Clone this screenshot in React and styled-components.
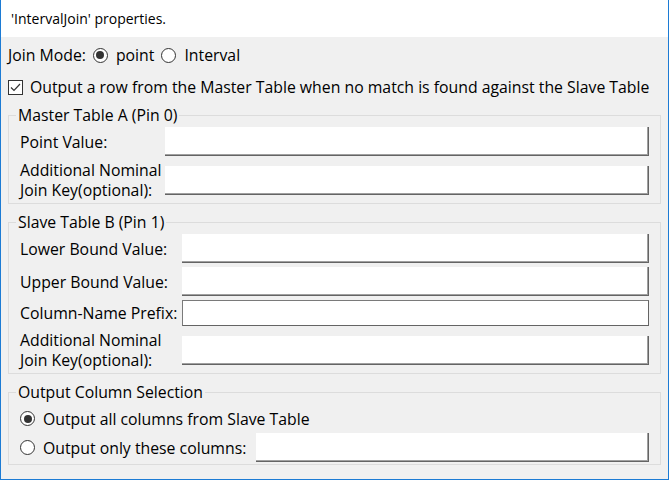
import styled, { createGlobalStyle } from "styled-components";

const GlobalStyle = createGlobalStyle`
    html, body {
        margin: 0;
        padding: 0;
        background: #ffffff;
    }
    * {
        box-sizing: border-box;
    }
`;

const Window = styled.div`
    width: 669px;
    height: 480px;
    background: #f0f0f0;
    border: 1px solid #1c7bd4;
    border-top: none;
    font-family: "Open Sans", "Noto Sans", sans-serif;
    font-size: 15.8px;
    color: #000;
    display: flex;
    flex-direction: column;
`;

const TitleBar = styled.div`
    height: 37px;
    flex: none;
    background: #fff;
    padding-left: 10px;
    line-height: 37px;
    font-size: 14px;
`;

const Content = styled.div`
    padding: 2px 7px 0 7px;
`;

const Line = styled.div`
    height: 32px;
    display: flex;
    align-items: center;
    gap: ${(p) => p.$gap || 7}px;
    white-space: nowrap;
`;

const Choice = styled.label`
    display: flex;
    align-items: center;
    gap: 8px;
`;

const RadioDot = styled.span`
    width: 15px;
    height: 15px;
    flex: none;
    border-radius: 50%;
    border: 1px solid #333;
    background: #fff;
    display: flex;
    align-items: center;
    justify-content: center;

    &::after {
        content: "";
        width: 8px;
        height: 8px;
        border-radius: 50%;
        background: ${(p) => (p.$checked ? "#333" : "transparent")};
    }
`;

const CheckBox = styled.span`
    width: 15px;
    height: 15px;
    flex: none;
    border: 1px solid #333;
    background: #fff;
    display: flex;
    align-items: center;
    justify-content: center;
`;

const Group = styled.fieldset`
    margin: ${(p) => p.$top || 0}px 0 0 0;
    padding: ${(p) => p.$padTop || 0}px 11px ${(p) => p.$padBottom || 1}px 11px;
    border: 1px solid #dcdcdc;
    min-width: 0;
`;

const Legend = styled.legend`
    margin-left: -4px;
    padding: 0 2px;
    line-height: 20px;
`;

const FormRow = styled.div`
    display: grid;
    grid-template-columns: ${(p) => p.$labelWidth}px 1fr;
    align-items: center;
    padding: 2px 0;
`;

const Label = styled.div`
    line-height: 20px;
    white-space: nowrap;
`;

const Field = styled.input`
    display: block;
    width: 100%;
    height: ${(p) => (p.$framed ? 26 : 29)}px;
    margin: 0;
    padding: 0 4px;
    font: inherit;
    background: #fff;
    outline: none;
    border: ${(p) => (p.$framed ? "1px solid #7a7a7a" : "none")};
    border-right: 1px solid #646464;
    border-bottom: 1px solid #646464;
    box-shadow: ${(p) => (p.$framed ? "none" : "inset -1px -1px 0 #a0a0a0")};
`;

const OptionRow = styled.div`
    height: 29px;
    display: flex;
    align-items: center;
    gap: 10px;
    white-space: nowrap;
`;

const Check = () => (
    <svg width="11" height="9" viewBox="0 0 11 9">
        <path d="M1 4.5 L4 7.5 L10 1" fill="none" stroke="#333" strokeWidth="1.2" />
    </svg>
);

const masterRows = [
    { label: "Point Value:" },
    { label: ["Additional Nominal", "Join Key(optional):"] },
];

const slaveRows = [
    { label: "Lower Bound Value:" },
    { label: "Upper Bound Value:" },
    { label: "Column-Name Prefix:", framed: true },
    { label: ["Additional Nominal", "Join Key(optional):"] },
];

const Rows = ({ rows, labelWidth }) =>
    rows.map((row, i) => (
        <FormRow $labelWidth={labelWidth} key={i}>
            <Label>
                {Array.isArray(row.label)
                    ? row.label.map((l) => <div key={l}>{l}</div>)
                    : row.label}
            </Label>
            <Field type="text" $framed={row.framed} />
        </FormRow>
    ));

export default function App() {
    return (
        <>
            <GlobalStyle />
            <Window>
                <TitleBar>'IntervalJoin' properties.</TitleBar>
                <Content>
                    <Line>
                        <span>Join Mode:</span>
                        <Choice>
                            <RadioDot $checked />
                            point
                        </Choice>
                        <Choice>
                            <RadioDot />
                            Interval
                        </Choice>
                    </Line>
                    <Line $gap={7}>
                        <CheckBox>
                            <Check />
                        </CheckBox>
                        <span>
                            Output a row from the Master Table when no match is
                            found against the Slave Table
                        </span>
                    </Line>
                    <Group $top={2}>
                        <Legend>Master Table A (Pin 0)</Legend>
                        <Rows rows={masterRows} labelWidth={145} />
                    </Group>
                    <Group $top={8}>
                        <Legend>Slave Table B (Pin 1)</Legend>
                        <Rows rows={slaveRows} labelWidth={162} />
                    </Group>
                    <Group $top={8} $padTop={2} $padBottom={2}>
                        <Legend>Output Column Selection</Legend>
                        <OptionRow>
                            <Choice>
                                <RadioDot $checked />
                                Output all columns from Slave Table
                            </Choice>
                        </OptionRow>
                        <OptionRow>
                            <Choice>
                                <RadioDot />
                                Output only these columns:
                            </Choice>
                            <Field type="text" />
                        </OptionRow>
                    </Group>
                </Content>
            </Window>
        </>
    );
}
